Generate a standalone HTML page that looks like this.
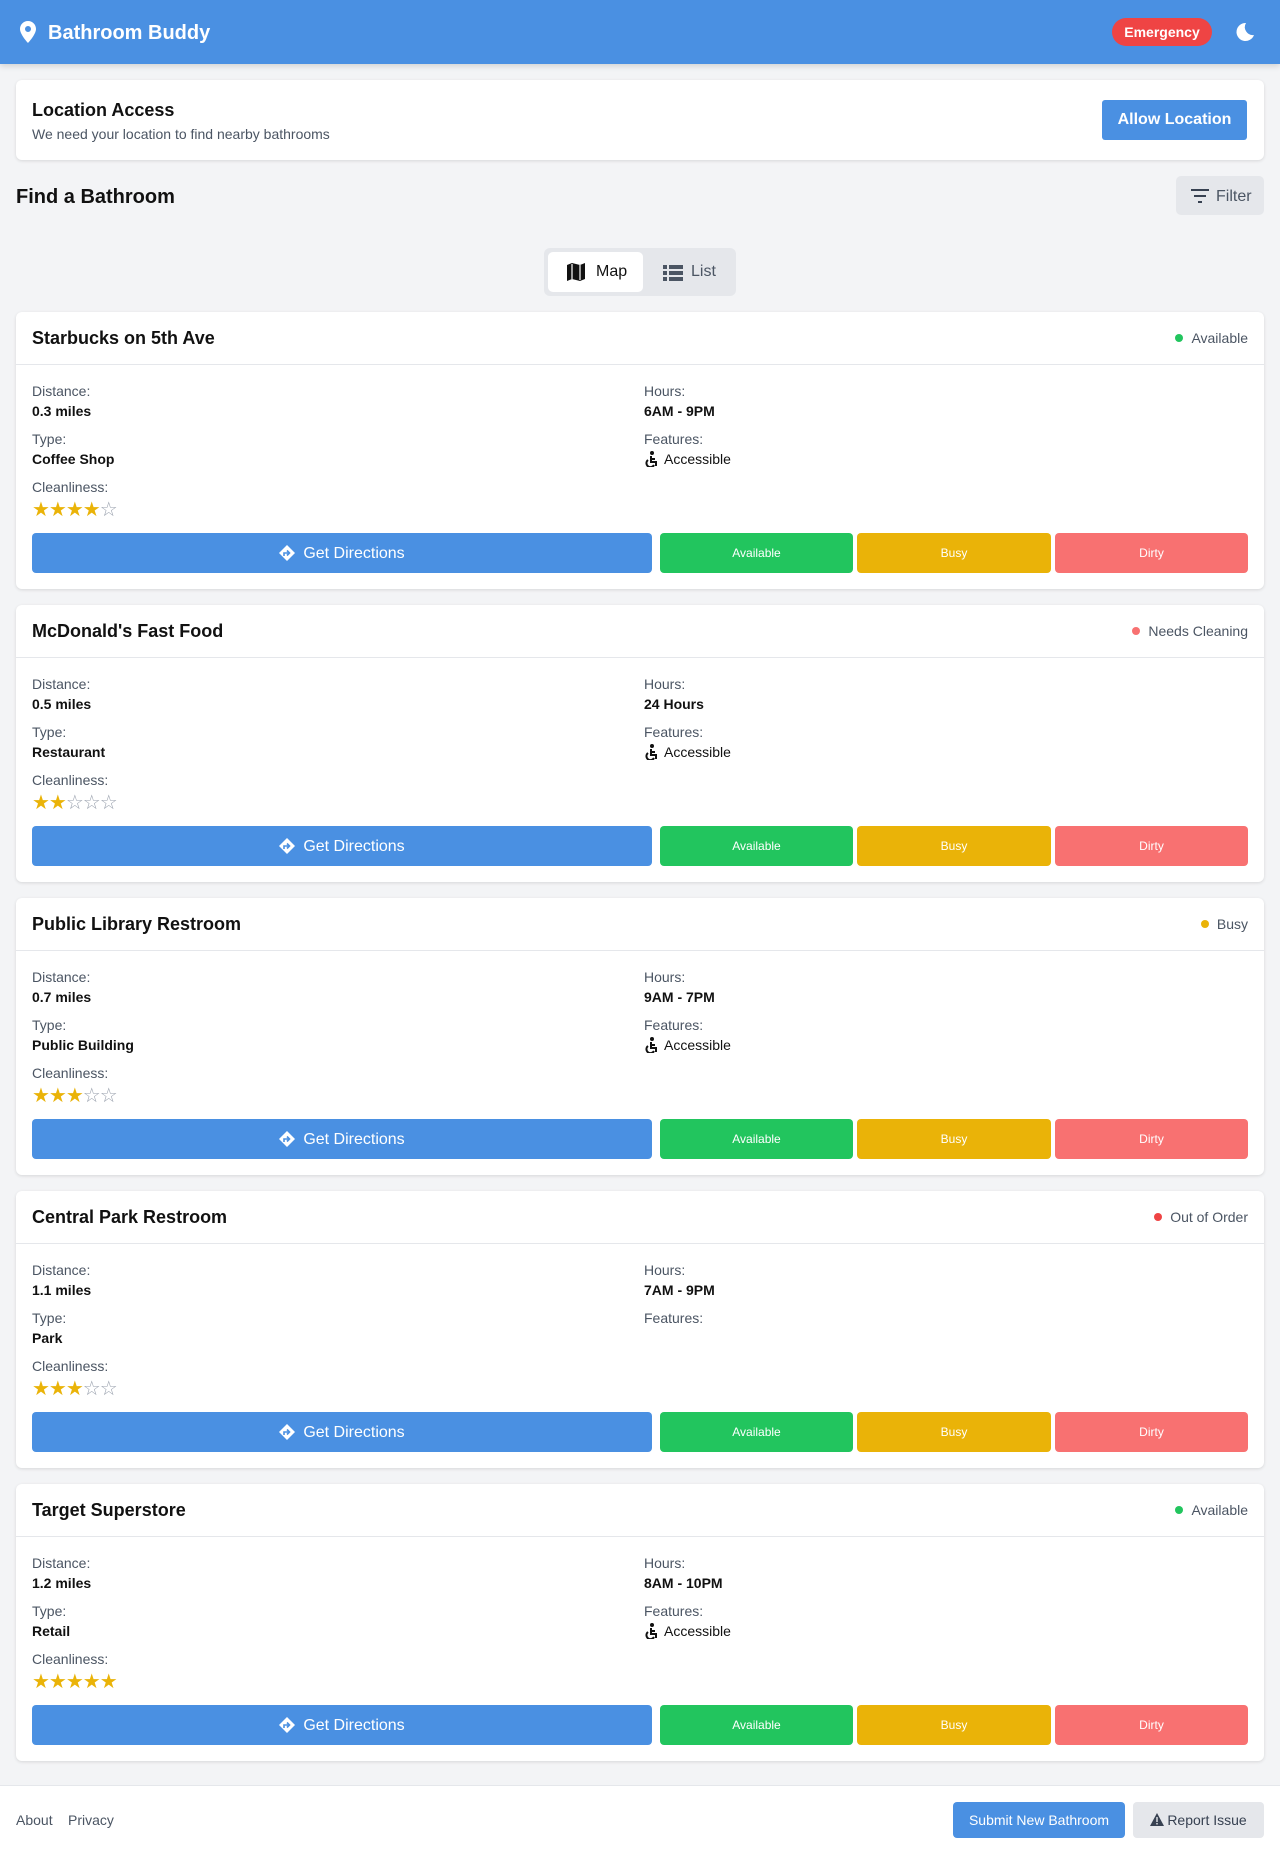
<!DOCTYPE html>
<html><head><meta charset="utf-8">
<style>
*{box-sizing:border-box;margin:0;padding:0}
body{width:1280px;height:1854px;background:#f3f4f6;font-family:"Liberation Sans",Arial,sans-serif;color:#111;position:relative;overflow:hidden}
.hdr{position:absolute;left:0;top:0;width:1280px;height:64px;background:#4a90e2;box-shadow:0 2px 6px rgba(0,0,0,.15)}
.hdr .t{position:absolute;left:48px;top:22px;color:#fff;font-weight:bold;font-size:20px}
.pin{position:absolute;left:19px;top:21px}
.emer{position:absolute;left:1112px;top:18px;width:100px;height:28px;border-radius:14px;background:#ef4444;color:#fff;font-weight:bold;font-size:14px;text-align:center;line-height:28px}
.moon{position:absolute;left:1233px;top:21px}
.card{position:absolute;left:16px;width:1248px;background:#fff;border-radius:6px;box-shadow:0 1px 3px rgba(0,0,0,.12)}
.loc{top:80px;height:80px}
.loc h2{position:absolute;left:16px;top:20px;font-size:18px}
.loc p{position:absolute;left:16px;top:46px;font-size:14px;color:#4b5563}
.allow{position:absolute;left:1086px;top:20px;width:145px;height:40px;background:#4a90e2;color:#fff;font-weight:bold;font-size:16px;border-radius:3px;text-align:center;line-height:40px}
.find{position:absolute;left:16px;top:186px;font-size:20px;font-weight:bold}
.filter{position:absolute;left:1176px;top:176px;width:88px;height:39px;background:#e5e7eb;border-radius:5px;color:#4b5563;font-size:16px;line-height:41px;padding-left:40px}
.filter svg{position:absolute;left:14px;top:12px}
.tog{position:absolute;left:544px;top:248px;width:192px;height:48px;background:#e5e7eb;border-radius:6px}
.tog .m{position:absolute;left:4px;top:4px;width:95px;height:40px;background:#fff;border-radius:5px;font-size:16px;line-height:40px;padding-left:48px;color:#111}
.tog .m svg{position:absolute;left:18px;top:11px}
.tog .l{position:absolute;left:107px;top:4px;height:40px;font-size:16px;line-height:40px;padding-left:40px;color:#4b5563}
.tog .l svg{position:absolute;left:12px;top:13px}
.bc{height:277px}
.bc .title{position:absolute;left:16px;top:16px;font-size:18px;font-weight:bold}
.bc .st{position:absolute;right:16px;top:18px;font-size:14px;color:#4b5563}
.bc .st i{display:inline-block;width:8px;height:8px;border-radius:50%;margin-right:8px;vertical-align:1px}
.bc .div{position:absolute;left:0;top:52px;width:100%;height:1px;background:#e5e7eb}
.lb{position:absolute;font-size:14px;color:#4b5563;margin-top:1px}
.vl{position:absolute;font-size:14px;font-weight:bold;margin-top:1px}
.acc{position:absolute;font-size:14px;color:#111;margin-top:1px}
.acc svg{vertical-align:-3px;margin-right:6px}
.stars{position:absolute;left:16px;top:188px;font-size:20px;letter-spacing:-1px;line-height:20px}
.stars .f{color:#eab308}.stars .e{color:#9ca3af}
.btns{position:absolute;left:16px;top:221px;height:40px;width:1216px}
.b{position:absolute;top:0;height:40px;border-radius:4px;color:#fff;text-align:center;line-height:40px;font-size:12px}
.gd{left:0;width:620px;background:#4a90e2;font-size:16px;line-height:41px}
.gd svg{vertical-align:-3px;margin-right:8px}
.av{left:628px;width:193px;background:#22c55e}
.bu{left:825px;width:194px;background:#eab308}
.di{left:1023px;width:193px;background:#f87171}
.foot{position:absolute;left:0;top:1785px;width:1280px;height:69px;background:#fff;border-top:1px solid #e5e7eb}
.foot .a{position:absolute;top:26px;font-size:14px;color:#4b5563}
.sub{position:absolute;left:953px;top:16px;width:172px;height:36px;background:#4a90e2;color:#fff;border-radius:4px;font-size:14px;text-align:center;line-height:36px}
.rep{position:absolute;left:1133px;top:16px;width:131px;height:36px;background:#e5e7eb;color:#374151;border-radius:4px;font-size:14px;text-align:center;line-height:36px}
</style></head><body>
<div class="hdr">
<svg class="pin" width="18" height="22" viewBox="0 0 18 22"><path d="M9 0C4.5 0 1 3.5 1 8c0 5.5 8 14 8 14s8-8.5 8-14c0-4.5-3.5-8-8-8zm0 11a3 3 0 110-6 3 3 0 010 6z" fill="#fff"/></svg>
<div class="t">Bathroom Buddy</div>
<div class="emer">Emergency</div>
<svg class="moon" width="22" height="22" viewBox="0 0 22 22"><path d="M13 2a9 9 0 108 12A8 8 0 0113 2z" fill="#fff"/></svg>
</div>
<div class="card loc"><h2>Location Access</h2><p>We need your location to find nearby bathrooms</p><div class="allow">Allow Location</div></div>
<div class="find">Find a Bathroom</div>
<div class="filter"><svg width="20" height="16" viewBox="0 0 20 16"><path d="M1 2h18M4 8h12M8 14h4" stroke="#374151" stroke-width="2"/></svg>Filter</div>
<div class="tog"><div class="m"><svg width="20" height="18" viewBox="0 0 20 18"><path d="M1 2l5-2 8 2 5-2v16l-5 2-8-2-5 2z" fill="#111"/><path d="M6 1v15M14 2v15" stroke="#fff" stroke-width="1.2"/></svg>Map</div><div class="l"><svg width="20" height="16" viewBox="0 0 20 16"><path d="M0 0h4v4H0zM6 0h14v4H6zM0 6h4v4H0zM6 6h14v4H6zM0 12h4v4H0zM6 12h14v4H6z" fill="#4b5563"/></svg>List</div></div>

<div class="card bc" style="top:312px">
<div class="title">Starbucks on 5th Ave</div><div class="st"><i style="background:#22c55e"></i>Available</div><div class="div"></div>
<div class="lb" style="left:16px;top:70px">Distance:</div><div class="vl" style="left:16px;top:90px">0.3 miles</div>
<div class="lb" style="left:16px;top:118px">Type:</div><div class="vl" style="left:16px;top:138px">Coffee Shop</div>
<div class="lb" style="left:16px;top:166px">Cleanliness:</div>
<div class="stars"><span class="f">★★★★</span><span class="e">☆</span></div>
<div class="lb" style="left:628px;top:70px">Hours:</div><div class="vl" style="left:628px;top:90px">6AM - 9PM</div>
<div class="lb" style="left:628px;top:118px">Features:</div><div class="acc" style="left:628px;top:138px"><svg width="14" height="16" viewBox="0 0 14 16"><circle cx="8" cy="2" r="2" fill="#111"/><path d="M7 5v6h5v4M7 8h4M4 9a4 4 0 106 5" stroke="#111" stroke-width="2" fill="none"/></svg>Accessible</div>
<div class="btns"><div class="b gd"><svg width="16" height="16" viewBox="0 0 16 16"><path d="M8 0l8 8-8 8-8-8z" fill="#fff"/><path d="M5 11V8h5M8 5.5L10.5 8 8 10.5" stroke="#4a90e2" stroke-width="1.6" fill="none"/></svg>Get Directions</div><div class="b av">Available</div><div class="b bu">Busy</div><div class="b di">Dirty</div></div>
</div>

<div class="card bc" style="top:605px">
<div class="title">McDonald's Fast Food</div><div class="st"><i style="background:#f87171"></i>Needs Cleaning</div><div class="div"></div>
<div class="lb" style="left:16px;top:70px">Distance:</div><div class="vl" style="left:16px;top:90px">0.5 miles</div>
<div class="lb" style="left:16px;top:118px">Type:</div><div class="vl" style="left:16px;top:138px">Restaurant</div>
<div class="lb" style="left:16px;top:166px">Cleanliness:</div>
<div class="stars"><span class="f">★★</span><span class="e">☆☆☆</span></div>
<div class="lb" style="left:628px;top:70px">Hours:</div><div class="vl" style="left:628px;top:90px">24 Hours</div>
<div class="lb" style="left:628px;top:118px">Features:</div><div class="acc" style="left:628px;top:138px"><svg width="14" height="16" viewBox="0 0 14 16"><circle cx="8" cy="2" r="2" fill="#111"/><path d="M7 5v6h5v4M7 8h4M4 9a4 4 0 106 5" stroke="#111" stroke-width="2" fill="none"/></svg>Accessible</div>
<div class="btns"><div class="b gd"><svg width="16" height="16" viewBox="0 0 16 16"><path d="M8 0l8 8-8 8-8-8z" fill="#fff"/><path d="M5 11V8h5M8 5.5L10.5 8 8 10.5" stroke="#4a90e2" stroke-width="1.6" fill="none"/></svg>Get Directions</div><div class="b av">Available</div><div class="b bu">Busy</div><div class="b di">Dirty</div></div>
</div>

<div class="card bc" style="top:898px">
<div class="title">Public Library Restroom</div><div class="st"><i style="background:#eab308"></i>Busy</div><div class="div"></div>
<div class="lb" style="left:16px;top:70px">Distance:</div><div class="vl" style="left:16px;top:90px">0.7 miles</div>
<div class="lb" style="left:16px;top:118px">Type:</div><div class="vl" style="left:16px;top:138px">Public Building</div>
<div class="lb" style="left:16px;top:166px">Cleanliness:</div>
<div class="stars"><span class="f">★★★</span><span class="e">☆☆</span></div>
<div class="lb" style="left:628px;top:70px">Hours:</div><div class="vl" style="left:628px;top:90px">9AM - 7PM</div>
<div class="lb" style="left:628px;top:118px">Features:</div><div class="acc" style="left:628px;top:138px"><svg width="14" height="16" viewBox="0 0 14 16"><circle cx="8" cy="2" r="2" fill="#111"/><path d="M7 5v6h5v4M7 8h4M4 9a4 4 0 106 5" stroke="#111" stroke-width="2" fill="none"/></svg>Accessible</div>
<div class="btns"><div class="b gd"><svg width="16" height="16" viewBox="0 0 16 16"><path d="M8 0l8 8-8 8-8-8z" fill="#fff"/><path d="M5 11V8h5M8 5.5L10.5 8 8 10.5" stroke="#4a90e2" stroke-width="1.6" fill="none"/></svg>Get Directions</div><div class="b av">Available</div><div class="b bu">Busy</div><div class="b di">Dirty</div></div>
</div>

<div class="card bc" style="top:1191px">
<div class="title">Central Park Restroom</div><div class="st"><i style="background:#ef4444"></i>Out of Order</div><div class="div"></div>
<div class="lb" style="left:16px;top:70px">Distance:</div><div class="vl" style="left:16px;top:90px">1.1 miles</div>
<div class="lb" style="left:16px;top:118px">Type:</div><div class="vl" style="left:16px;top:138px">Park</div>
<div class="lb" style="left:16px;top:166px">Cleanliness:</div>
<div class="stars"><span class="f">★★★</span><span class="e">☆☆</span></div>
<div class="lb" style="left:628px;top:70px">Hours:</div><div class="vl" style="left:628px;top:90px">7AM - 9PM</div>
<div class="lb" style="left:628px;top:118px">Features:</div>
<div class="btns"><div class="b gd"><svg width="16" height="16" viewBox="0 0 16 16"><path d="M8 0l8 8-8 8-8-8z" fill="#fff"/><path d="M5 11V8h5M8 5.5L10.5 8 8 10.5" stroke="#4a90e2" stroke-width="1.6" fill="none"/></svg>Get Directions</div><div class="b av">Available</div><div class="b bu">Busy</div><div class="b di">Dirty</div></div>
</div>

<div class="card bc" style="top:1484px">
<div class="title">Target Superstore</div><div class="st"><i style="background:#22c55e"></i>Available</div><div class="div"></div>
<div class="lb" style="left:16px;top:70px">Distance:</div><div class="vl" style="left:16px;top:90px">1.2 miles</div>
<div class="lb" style="left:16px;top:118px">Type:</div><div class="vl" style="left:16px;top:138px">Retail</div>
<div class="lb" style="left:16px;top:166px">Cleanliness:</div>
<div class="stars"><span class="f">★★★★★</span></div>
<div class="lb" style="left:628px;top:70px">Hours:</div><div class="vl" style="left:628px;top:90px">8AM - 10PM</div>
<div class="lb" style="left:628px;top:118px">Features:</div><div class="acc" style="left:628px;top:138px"><svg width="14" height="16" viewBox="0 0 14 16"><circle cx="8" cy="2" r="2" fill="#111"/><path d="M7 5v6h5v4M7 8h4M4 9a4 4 0 106 5" stroke="#111" stroke-width="2" fill="none"/></svg>Accessible</div>
<div class="btns"><div class="b gd"><svg width="16" height="16" viewBox="0 0 16 16"><path d="M8 0l8 8-8 8-8-8z" fill="#fff"/><path d="M5 11V8h5M8 5.5L10.5 8 8 10.5" stroke="#4a90e2" stroke-width="1.6" fill="none"/></svg>Get Directions</div><div class="b av">Available</div><div class="b bu">Busy</div><div class="b di">Dirty</div></div>
</div>

<div class="foot">
<div class="a" style="left:16px">About</div><div class="a" style="left:68px">Privacy</div>
<div class="sub">Submit New Bathroom</div>
<div class="rep"><svg width="14" height="13" viewBox="0 0 14 13" style="vertical-align:-1px;margin-right:3px"><path d="M7 0l7 13H0z" fill="#374151"/><path d="M7 4v5M7 10v1.5" stroke="#e5e7eb" stroke-width="1.4"/></svg>Report Issue</div>
</div>
</body></html>
